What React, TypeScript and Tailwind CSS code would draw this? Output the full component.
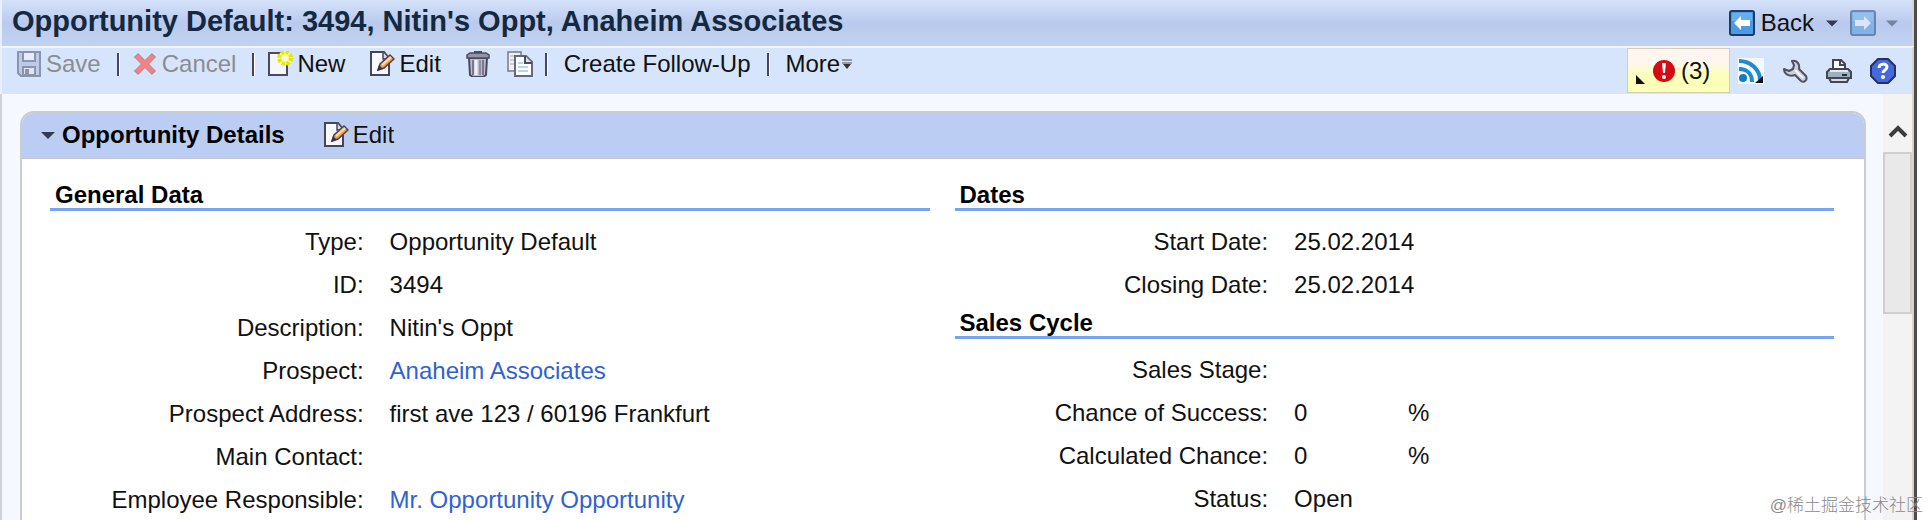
import type { ReactNode } from "react";

type Field = {
    label: string;
    value?: string;
    unit?: string;
    href?: string;
};

const generalData: Field[] = [
    { label: "Type:", value: "Opportunity Default" },
    { label: "ID:", value: "3494" },
    { label: "Description:", value: "Nitin's Oppt" },
    { label: "Prospect:", value: "Anaheim Associates", href: "#prospect" },
    { label: "Prospect Address:", value: "first ave 123 / 60196 Frankfurt" },
    { label: "Main Contact:" },
    { label: "Employee Responsible:", value: "Mr. Opportunity Opportunity", href: "#employee" },
];

const dates: Field[] = [
    { label: "Start Date:", value: "25.02.2014" },
    { label: "Closing Date:", value: "25.02.2014" },
];

const salesCycle: Field[] = [
    { label: "Sales Stage:" },
    { label: "Chance of Success:", value: "0", unit: "%" },
    { label: "Calculated Chance:", value: "0", unit: "%" },
    { label: "Status:", value: "Open" },
];

function Icon({ children, className = "" }: { children: ReactNode; className?: string }) {
    return (
        <svg viewBox="0 0 26 26" className={`w-[26px] h-[26px] shrink-0 ${className}`} fill="none" aria-hidden="true">
            {children}
        </svg>
    );
}

function SaveIcon() {
    return (
        <Icon>
            <path d="M2 1h22v24H5l-3-3z" fill="#bccbea" stroke="#8c93ad" strokeWidth="2" />
            <path d="M7 1h12v9H7z" fill="#e6edfa" stroke="#8c93ad" strokeWidth="2" />
            <path d="M7 16h12v8H7z" fill="#dfe7f7" stroke="#8c93ad" strokeWidth="2" />
            <path d="M9 18h4v6H9z" fill="#8c93ad" />
        </Icon>
    );
}

function CancelIcon() {
    return (
        <Icon>
            <path d="M4 4l18 18M22 4L4 22" stroke="#b98a9b" strokeWidth="6" />
            <path d="M5 5l16 16M21 5L5 21" stroke="#f5827f" strokeWidth="4" />
        </Icon>
    );
}

function NewIcon() {
    return (
        <Icon>
            <path d="M2 2h18v22H2z" fill="#f6f7fd" stroke="#4a4a63" strokeWidth="2" />
            <circle cx="18" cy="7" r="7" fill="#f7f98a" />
            <circle cx="18" cy="7" r="6" stroke="#e6e600" strokeWidth="4" strokeDasharray="3 1.7" />
            <circle cx="18" cy="7" r="3" fill="#fbfbd8" />
        </Icon>
    );
}

function EditIcon() {
    return (
        <Icon>
            <path d="M2 1h13l5 6v17H2z" fill="#f8f9fe" stroke="#45455c" strokeWidth="2" />
            <path d="M14 1v7h6" fill="#d5d8e6" stroke="#45455c" strokeWidth="1.5" />
            <path d="M9 19l2-6L21 4l4 4-10 9z" fill="#f0a256" stroke="#51404a" strokeWidth="1.5" />
            <path d="M13 14l9-8" stroke="#ffe0ad" strokeWidth="2" />
            <path d="M8 20l2-6 4 4z" fill="#3a3440" />
        </Icon>
    );
}

function TrashIcon() {
    return (
        <Icon>
            <path d="M4 7h18l-1 17-3 2H8l-3-2z" fill="#b9bdce" stroke="#4b4b60" strokeWidth="2" />
            <path d="M8 9v15M18 9v15" stroke="#77798e" strokeWidth="2" />
            <path d="M11 9v15" stroke="#f0f2fa" strokeWidth="3" />
            <path d="M15 9v15" stroke="#8d90a3" strokeWidth="2" />
            <path d="M2 4l3-2h16l3 2v3H2z" fill="#9296a8" stroke="#4b4b60" strokeWidth="1.5" />
            <path d="M9 1h8" stroke="#4b4b60" strokeWidth="2" />
        </Icon>
    );
}

function CopyIcon() {
    return (
        <Icon>
            <path d="M1 1h13v19H1z" fill="#eef0f6" stroke="#77788a" strokeWidth="1.5" />
            <path d="M3 5h5M3 9h4M3 13h4" stroke="#c8ccd8" strokeWidth="2" />
            <path d="M8 5h11l6 6v14H8z" fill="#fbfcff" stroke="#66677b" strokeWidth="2" />
            <path d="M18 5v7h7" fill="#dfe2ec" stroke="#4b4b60" strokeWidth="2" />
            <path d="M11 12h5M11 16h10M11 20h10" stroke="#a7c6e4" strokeWidth="1.5" />
        </Icon>
    );
}

function ArrowBoxIcon({ forward = false }: { forward?: boolean }) {
    return (
        <Icon className={forward ? "-scale-x-100 opacity-50" : ""}>
            <rect x="1" y="1" width="24" height="24" rx="2" fill="#4a9be3" stroke="#1e3b66" strokeWidth="2" />
            <path d="M3 3h20v8H3z" fill="#79bdf2" opacity=".6" />
            <path d="M5 13l7-7v4h9v6h-9v4z" fill="#fff" />
        </Icon>
    );
}

function AlertIcon() {
    return (
        <Icon>
            <circle cx="13" cy="13" r="11" fill="#d50a12" />
            <path d="M11 5h4l-1 10h-2z" fill="#fff" />
            <circle cx="13" cy="19" r="2" fill="#fff" />
        </Icon>
    );
}

function FeedIcon() {
    return (
        <Icon>
            <path d="M0 0h26v26H0z" fill="#f4f9ff" />
            <circle cx="5" cy="20" r="4" fill="#137cc0" />
            <path d="M1 11c8 0 13 5 13 13" stroke="#1f8bcd" strokeWidth="4" />
            <path d="M1 3c12 0 21 9 21 19" stroke="#1f8bcd" strokeWidth="4" />
            <path d="M25 18v7h-8z" fill="#111" />
        </Icon>
    );
}

function WrenchIcon() {
    return (
        <Icon>
            <path
                d="M10 3c5-1 8 3 7 8l7 7c2 4-2 7-5 5l-6-6c-6 2-11-1-11-6l5 2 4-2 1-4z"
                fill="#cdd0da"
                stroke="#50505f"
                strokeWidth="2"
                strokeLinejoin="round"
            />
            <path d="M13 12l8 8" stroke="#f5f6fa" strokeWidth="2" />
        </Icon>
    );
}

function PrinterIcon() {
    return (
        <Icon>
            <path d="M7 12V2h8l4 4v6z" fill="#fff" stroke="#454556" strokeWidth="2" />
            <path d="M14 2v5h5" stroke="#454556" strokeWidth="2" />
            <path d="M4 11h18l3 3v6H1v-6z" fill="#9fb0c0" stroke="#454556" strokeWidth="2" />
            <path d="M4 13h18" stroke="#e4e9ef" strokeWidth="2" />
            <path d="M16 17h5" stroke="#26303c" strokeWidth="2" />
            <path d="M3 20h20l-2 4H5z" fill="#d9dce3" stroke="#454556" strokeWidth="2" />
        </Icon>
    );
}

function HelpIcon() {
    return (
        <Icon>
            <path d="M8 1h10l7 7v10l-7 7H8l-7-7V8z" fill="#4468de" stroke="#27305e" strokeWidth="2" strokeLinejoin="round" />
            <path d="M9 10c0-5 8-5 8-1 0 3-4 3-4 6" stroke="#fff" strokeWidth="3" />
            <circle cx="13" cy="19" r="2" fill="#fff" />
        </Icon>
    );
}

function Caret({ className = "w-[14px]" }: { className?: string }) {
    return (
        <svg viewBox="0 0 14 8" className={`h-2 ${className}`} aria-hidden="true">
            <path d="M0 1h14L7 8z" fill="#333a55" />
        </svg>
    );
}

function Separator({ className = "" }: { className?: string }) {
    return <span className={`w-[3px] h-[23px] bg-[#45465c] border-r border-white ${className}`} />;
}

function FieldGroup({ title, fields }: { title: string; fields: Field[] }) {
    return (
        <section>
            <h3 className="pl-[5px] pt-[3px] leading-[27px] font-bold text-black border-b-[3px] border-[#78a3f0]">{title}</h3>
            <dl className="pt-[9px]">
                {fields.map((field) => (
                    <div key={field.label} className="flex h-[43px] leading-[43px]">
                        <dt className="w-[36%] pr-[3px] text-right whitespace-nowrap">{field.label}</dt>
                        <dd className="flex pl-[23px] whitespace-nowrap">
                            {field.href ? (
                                <a href={field.href} className="text-[#2f62d3]">
                                    {field.value}
                                </a>
                            ) : (
                                <span className={field.unit ? "w-[114px]" : ""}>{field.value}</span>
                            )}
                            {field.unit && <span>{field.unit}</span>}
                        </dd>
                    </div>
                ))}
            </dl>
        </section>
    );
}

export default function App() {
    return (
        <div className="relative h-screen overflow-hidden bg-white pr-[13px] font-['Liberation_Sans',Arial,sans-serif] text-2xl text-[#111]">
            <div className="flex h-full flex-col border-r-[3px] border-[#4c4c4c]">
                <header className="flex h-[46px] shrink-0 items-center justify-between bg-linear-to-b from-[#d6e2fa] via-[#b9caee] to-[#c1d2f1] pl-[10px] pr-[14px] border-l-2 border-l-[#e9effc] border-r-2 border-r-[#d8d4cc]">
                    <h1 className="pb-1 text-[29px] font-bold leading-9 text-[#14293f] whitespace-nowrap">
                        Opportunity Default: 3494, Nitin's Oppt, Anaheim Associates
                    </h1>
                    <div className="flex items-center">
                        <button type="button" className="flex items-center gap-[6px]">
                            <ArrowBoxIcon />
                            Back
                        </button>
                        <button type="button" aria-label="Back history" className="ml-3">
                            <Caret className="w-3" />
                        </button>
                        <button type="button" aria-label="Forward" className="ml-3" disabled>
                            <ArrowBoxIcon forward />
                        </button>
                        <button type="button" aria-label="Forward history" className="ml-[10px]" disabled>
                            <Caret className="w-3 opacity-50" />
                        </button>
                    </div>
                </header>

                <div className="flex h-12 shrink-0 items-start justify-between border-t-2 border-t-[#f2f7ff] border-l-2 border-l-[#e9effc] border-r-2 border-r-[#d8d4cc] bg-[#d6e5fc] pl-[14px] pr-4">
                    <div className="flex h-8 items-center whitespace-nowrap">
                        <button type="button" className="flex items-center gap-1 text-[#8b8d90]" disabled>
                            <SaveIcon />
                            Save
                        </button>
                        <Separator className="ml-4 mr-3" />
                        <button type="button" className="flex items-center gap-1 text-[#8b8d90]" disabled>
                            <CancelIcon />
                            Cancel
                        </button>
                        <Separator className="ml-4 mr-3" />
                        <button type="button" className="flex items-center gap-1">
                            <NewIcon />
                            New
                        </button>
                        <button type="button" className="ml-6 flex items-center gap-1">
                            <EditIcon />
                            Edit
                        </button>
                        <button type="button" aria-label="Delete" className="ml-6">
                            <TrashIcon />
                        </button>
                        <button type="button" aria-label="Copy" className="ml-4">
                            <CopyIcon />
                        </button>
                        <Separator className="ml-3 mr-4" />
                        <button type="button">Create Follow-Up</button>
                        <Separator className="mx-4" />
                        <button type="button" className="flex items-center gap-[2px]">
                            More
                            <svg viewBox="0 0 10 10" className="w-[10px] h-[10px]" aria-hidden="true">
                                <path d="M0 1h10M0 4h10" stroke="#555" strokeWidth="1" />
                                <path d="M1 5h8l-4 5z" fill="#333" />
                            </svg>
                        </button>
                    </div>
                    <div className="flex items-center gap-[18px]">
                        <button
                            type="button"
                            className="-mr-[10px] flex h-[45px] w-[103px] items-center border border-[#d2cdb9] bg-linear-to-b from-[#fff6f0] from-30% to-[#fbffb8] to-60% pl-2"
                        >
                            <svg viewBox="0 0 9 9" className="mb-2 h-[9px] w-[9px] self-end" aria-hidden="true">
                                <path d="M0 0v9h9z" fill="#111" />
                            </svg>
                            <span className="ml-[6px] mr-1">
                                <AlertIcon />
                            </span>
                            (3)
                        </button>
                        <button type="button" aria-label="Feeds">
                            <FeedIcon />
                        </button>
                        <button type="button" aria-label="Personalize">
                            <WrenchIcon />
                        </button>
                        <button type="button" aria-label="Print">
                            <PrinterIcon />
                        </button>
                        <button type="button" aria-label="Help">
                            <HelpIcon />
                        </button>
                    </div>
                </div>

                <div className="flex min-h-0 flex-1 border-l-2 border-l-[#cfd3d6] bg-[#f6f8ff]">
                    <main className="min-w-0 flex-1 overflow-hidden pl-[18px] pr-[17px] pt-[17px]">
                        <div className="min-h-full rounded-t-[14px] border-2 border-[#c8cdd0] bg-white">
                            <div className="flex h-[46px] items-center rounded-t-[12px] border-b border-[#bfc5d0] bg-[#bccdf3] pb-[2px] pl-[19px]">
                                <button type="button" className="flex items-center gap-[7px] font-bold text-black" aria-expanded="true">
                                    <Caret />
                                    Opportunity Details
                                </button>
                                <button type="button" className="ml-[38px] flex items-center gap-1">
                                    <EditIcon />
                                    Edit
                                </button>
                            </div>
                            <div className="grid grid-cols-2 gap-[25px] pl-7 pr-[30px] pt-[19px]">
                                <FieldGroup title="General Data" fields={generalData} />
                                <div>
                                    <FieldGroup title="Dates" fields={dates} />
                                    <FieldGroup title="Sales Cycle" fields={salesCycle} />
                                </div>
                            </div>
                        </div>
                    </main>
                    <div className="w-[31px] border-r-2 border-[#d8d4cc] bg-[#f3f3f3]">
                        <button type="button" aria-label="Scroll up" className="flex h-[58px] w-full items-center justify-center pt-4">
                            <svg viewBox="0 0 20 14" className="h-[14px] w-5" fill="none" aria-hidden="true">
                                <path d="M2 12l8-8 8 8" stroke="#3c3c3c" strokeWidth="4" />
                            </svg>
                        </button>
                        <div className="h-[162px] border-2 border-[#cfcfcf] bg-[#e9e9e9]" />
                    </div>
                </div>
            </div>

            <span className="absolute bottom-[2px] right-[7px] font-['Liberation_Sans','Noto_Sans_CJK_SC',sans-serif] text-[17px] font-light leading-6 text-[#8a8a8a]">
                @稀土掘金技术社区
            </span>
        </div>
    );
}
